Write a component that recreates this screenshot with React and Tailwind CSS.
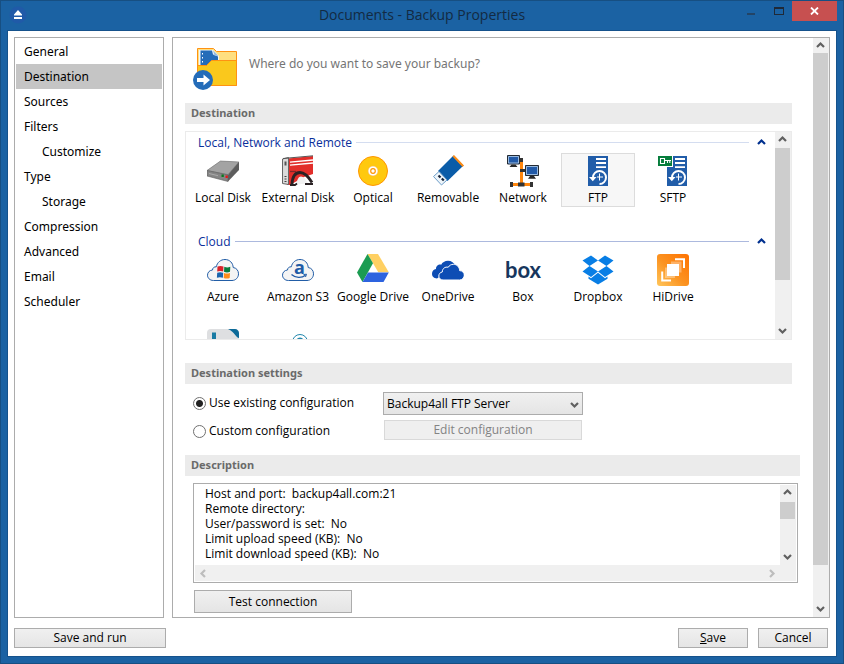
import React from "react";

function Chevron({ dir = "up", className = "" }) {
  const points = {
    up: "1,6 4.5,2.5 8,6",
    down: "1,3 4.5,6.5 8,3",
    left: "6,1 2.5,4.5 6,8",
    right: "3,1 6.5,4.5 3,8",
  };
  return (
    <svg viewBox="0 0 9 9" width="9" height="9" className={`shrink-0 ${className}`} fill="none" stroke="currentColor" strokeWidth="2.2">
      <polyline points={points[dir]} />
    </svg>
  );
}

function ScrollBar({ thumb, className = "" }) {
  return (
    <div className={`flex w-4 shrink-0 flex-col bg-[#f0f0f0] text-[#606060] ${className}`}>
      <button type="button" aria-label="Scroll up" className="flex h-[15px] w-[15px] shrink-0 items-center justify-center">
        <Chevron dir="up" />
      </button>
      <div className="min-h-0 flex-1">
        <div className={`w-[15px] bg-[#cdcdcd] ${thumb}`} />
      </div>
      <button type="button" aria-label="Scroll down" className="flex h-[17px] w-[15px] shrink-0 items-center justify-center pb-px">
        <Chevron dir="down" />
      </button>
    </div>
  );
}

function Icon({ children }) {
  return (
    <svg viewBox="0 0 32 32" width="32" height="32" className="block shrink-0">
      {children}
    </svg>
  );
}

const LocalDiskIcon = () => (
  <Icon>
    <path d="M13.5 6 32 7v4L21 20.500 0 15.500z" fill="#9b9b9b" />
    <path d="M13.500 6 32 7 21 19.500 0 15.500z" fill="#a3a3a3" stroke="#777" strokeWidth=".6" />
    <path d="M0 15.500 21 20v6.500L0 21z" fill="#858585" stroke="#5c5c5c" strokeWidth=".6" />
    <path d="M21 20 32 7v8L21 26.500z" fill="#5d5d5d" />
    <path d="M14.500 19.500h2.300v2.500h-2.300z" fill="#087a1d" />
    <path d="M18.500 20.500h2.300V23h-2.300z" fill="#e81717" />
    <path d="M2 18.500l9 2.200" stroke="#aaa" />
  </Icon>
);

const ExternalDiskIcon = () => (
  <Icon>
    <path d="M6 3.500 31 1v18L22 22 8 30H5z" fill="#e22e2a" />
    <path d="M.5 4 6.500 2.500v27l-6-1z" fill="#d9d9d9" stroke="#666" />
    <path d="M2.500 6.500h2v4h-2z" fill="#555" />
    <path d="M2.500 21.500h2M2.500 24h2M2.500 26.500h2" stroke="#444" />
    <path d="M1 3.500 31 .8" stroke="#555" />
    <path d="M8 7.200 31 5M8 10.200 31 8" stroke="#fff" strokeWidth="1.300" />
    <path d="M8 16.500h6" stroke="#7d2928" strokeWidth="1.300" />
    <path d="M14.500 29.500c.5-5 2-8 4.500-8s4.500 2.500 7 7z" fill="#f2f2f2" />
    <path d="M10 29c.5-8 3.500-11.500 8-11.500s8 3.500 12 10" fill="none" stroke="#2a2224" strokeWidth="2.800" />
    <path d="M8 30h5l2-1.500M23 29h8" fill="none" stroke="#2a2224" strokeWidth="1.800" />
  </Icon>
);

const OpticalIcon = () => (
  <Icon>
    <circle cx="16" cy="16" r="14.500" fill="#ffc90e" stroke="#ff9600" />
    <circle cx="16" cy="16" r="5" fill="#fff" stroke="#f5b14a" strokeWidth=".6" />
    <circle cx="16" cy="16" r="2.300" fill="#fff" stroke="#ff9600" strokeWidth="1.200" />
  </Icon>
);

const RemovableIcon = () => (
  <Icon>
    <path d="M21.500.5 31.500 10.500 15.500 26 6 16z" fill="#0a5ca8" />
    <path d="m20.500 1.500 1.500-1.500 10 10.500-1.500 1.500z" fill="#ff8c14" />
    <path d="m7 16.500 8 8.500-5.500 5-8-8.500z" fill="#eef5fa" stroke="#6d9dc9" />
    <path d="m6.500 20.500 2 2M9.800 23.500l2 2" stroke="#17263c" strokeWidth="2.200" />
  </Icon>
);

const NetworkIcon = () => (
  <Icon>
    <path d="M14.500 4v25M4 29.500h21" stroke="#ff860d" strokeWidth="3" fill="none" />
    <path d="M12 3h4v4h-4zM13 14h7v3h-7zM11 27.500h6.500v4H11zM3 27h3v5H3zM23 27h3v5h-3z" fill="#333" />
    <path d="M.5.500h12v8.500H.500zM18.500 10.500h13v10h-13z" fill="#225aa8" stroke="#252b33" />
    <path d="M1.500 1.500h10v6.500h-10zM19.500 11.500h11v8h-11z" fill="none" stroke="#b8d3ee" strokeWidth=".8" />
    <path d="M4.500 9.500h4l2 2.500h-8zM23 21h4l2 2.800h-8z" fill="#292929" />
  </Icon>
);

const ServerBody = () => (
  <g>
    <path d="M6 1h20v30H6z" fill="#215da9" />
    <path d="M14 4h10M14 8h10M14 12.200h10" stroke="#fff" strokeWidth="1.800" />
    <path d="M11 22.500a6.500 6.500 0 1 1 6.500 6.500" fill="none" stroke="#fff" strokeWidth="2" />
    <path d="M7 22h7.500l-3.700 4.200z" fill="#fff" />
    <path d="M17.500 18.500v7M15 22h6" stroke="#fff" />
  </g>
);

const FtpIcon = () => (
  <Icon>
    <ServerBody />
  </Icon>
);

const SftpIcon = () => (
  <Icon>
    <g transform="translate(4 0)">
      <ServerBody />
    </g>
    <path d="M0 0h16v12H0z" fill="#fff" />
    <path d="M1 1h14v10H1z" fill="#067d3c" />
    <path d="M3.500 3.500h4v5h-4zM7.500 5.500H14M10.500 5.500V8M12.800 5.500V8" fill="none" stroke="#fff" strokeWidth="1.100" />
  </Icon>
);

const CloudShape = () => (
  <path
    d="M6.500 26.500C2.500 26.500.5 23.700.5 21.200c0-2.900 2.200-5 5-5.200 0-1.900 1.600-3.400 3.800-3.200C10.200 8.500 13.600 5.500 18 5.500c4.700 0 8 3.500 8.200 8 3.300.5 5.300 3 5.300 6.300 0 3.700-2.700 6.700-6.500 6.700z"
    fill="#f4f4f4"
    stroke="#225da6"
    strokeWidth="1"
  />
);

const AzureIcon = () => (
  <Icon>
    <CloudShape />
    <path d="M10.500 12.500c2-.8 4-.8 6 0l-.3 5c-2-.8-4-.8-6 0z" fill="#d9222a" />
    <path d="M17.300 12.800c2 .8 4 .8 6 0l-.3 5c-2 .8-4 .8-6 0z" fill="#067d3c" />
    <path d="M10.200 18.800c2-.8 4-.8 6 0l-.3 5c-2-.8-4-.8-6 0z" fill="#1964ad" />
    <path d="M17 19c2 .8 4 .8 6 0l-.3 5c-2 .8-4 .8-6 0z" fill="#ff8c1a" />
  </Icon>
);

const AmazonIcon = () => (
  <Icon>
    <CloudShape />
    <text x="17.500" y="19.500" textAnchor="middle" fill="#205ba6" className="font-['Open_Sans',sans-serif] text-[18px] font-bold">a</text>
    <path d="M9.500 20.500c4 3.500 10 3.800 14 .8" fill="none" stroke="#205ba6" strokeWidth="1.400" />
    <path d="m21.500 20.500 3-.3-1 2.800" fill="none" stroke="#205ba6" />
  </Icon>
);

const GoogleDriveIcon = () => (
  <Icon>
    <path d="M10.500 0H21l10.800 18.300H21.300z" fill="#ffd062" />
    <path d="M10.500 0 16 9.300 5.500 28 0 18.500z" fill="#1b9c52" />
    <path d="M11 18.500h20.800L26.500 28h-21z" fill="#2d63df" />
  </Icon>
);

const OneDriveIcon = () => (
  <Icon>
    <path d="M5 24.500C2 24.500 0 22.500 0 19.800c0-2.500 1.700-4.300 4-4.700-.2-3 2.500-5 5.200-4.400C10.300 8.500 12.800 6.800 16 6.800c3.400 0 6.300 2 7.400 5.200z" fill="#0d4db4" />
    <path d="M11 26C8.500 26 6.800 24.200 6.800 22c0-2.100 1.400-3.700 3.500-4-.1-3.500 3-5.600 5.900-4.700 1-1.900 3-3 5.200-3 3.500 0 6.200 2.700 6.200 6.300 2.700.1 4.700 2 4.700 4.500 0 2.700-2 4.900-4.800 4.900z" fill="#0d4db4" stroke="#fff" strokeWidth="1" />
  </Icon>
);

const BoxIcon = () => (
  <svg viewBox="0 0 40 32" width="40" height="32" className="block shrink-0">
    <text x="20" y="24" textAnchor="middle" fill="#16365d" className="font-[Lato,sans-serif] text-[22px] font-bold">box</text>
  </svg>
);

const DropboxIcon = () => (
  <Icon>
    <path d="M9 1.500 16 6.600 7.500 12 .500 6.500zM23 1.500l8.500 5-7 5.500L16 6.600zM7.500 12l8.500 5.500L9 23 .500 17.500zM24.500 12l7 5.500L23 23l-7-5.500z" fill="#087ee5" />
    <path d="m16 18.800 7 5.400 2.500-1.700v2.300L16 30.500l-9.500-5.700v-2.300L9 24.200z" fill="#087ee5" />
  </Icon>
);

const HiDriveIcon = () => (
  <Icon>
    <defs>
      <linearGradient id="hidrive" x1="0" y1="1" x2="1" y2="0">
        <stop offset="0" stopColor="#ffc65b" />
        <stop offset=".45" stopColor="#fb9422" />
        <stop offset="1" stopColor="#ff7200" />
      </linearGradient>
    </defs>
    <rect width="32" height="32" rx="3" fill="url(#hidrive)" />
    <path d="M14 7.500h10.500v11H14z" fill="#fff" opacity=".35" />
    <path d="M8 13.500h10v10.500H8z" fill="#fff" opacity=".35" />
    <path d="M10 10h12v12H10z" fill="#fff" />
    <path d="M18 5.200h9V14M5.200 17.500V26.500H14" fill="none" stroke="#fff" strokeWidth="2" />
  </Icon>
);

const PartialTileIcon = () => (
  <Icon>
    <rect width="32" height="32" rx="4" fill="#dedfe1" />
    <path d="M5 3.500h4V16H5z" fill="#187aa3" />
    <path d="M21 0h7c2 0 4 2 4 4v5C29 9 28 3 21 0z" fill="#0d6a98" />
  </Icon>
);

const PartialRingIcon = () => (
  <Icon>
    <circle cx="18" cy="13" r="7.500" fill="#fff" stroke="#2187ad" />
    <circle cx="18" cy="12" r="3.500" fill="#2187ad" />
  </Icon>
);

const localItems = [
  { label: "Local Disk", icon: LocalDiskIcon },
  { label: "External Disk", icon: ExternalDiskIcon },
  { label: "Optical", icon: OpticalIcon },
  { label: "Removable", icon: RemovableIcon },
  { label: "Network", icon: NetworkIcon },
  { label: "FTP", icon: FtpIcon, selected: true },
  { label: "SFTP", icon: SftpIcon },
];

const cloudItems = [
  { label: "Azure", icon: AzureIcon },
  { label: "Amazon S3", icon: AmazonIcon },
  { label: "Google Drive", icon: GoogleDriveIcon },
  { label: "OneDrive", icon: OneDriveIcon },
  { label: "Box", icon: BoxIcon },
  { label: "Dropbox", icon: DropboxIcon },
  { label: "HiDrive", icon: HiDriveIcon },
  { label: "", icon: PartialTileIcon },
  { label: "", icon: PartialRingIcon },
];

function Group({ title, items, line }) {
  return (
    <section>
      <div className="flex h-[21px] items-center pr-[9px] pl-3">
        <h3 className="text-[#0a2f9b]">{title}</h3>
        <div className={`mr-2 ml-1 h-px flex-1 ${line}`} />
        <button type="button" aria-label={`Collapse ${title}`} className="text-[#00308f]">
          <Chevron dir="up" />
        </button>
      </div>
      <div className="flex flex-wrap gap-x-px gap-y-[21px]">
        {items.map(({ label, icon: Glyph, selected }, i) => (
          <button
            key={i}
            type="button"
            className={`flex h-[54px] w-[74px] flex-col items-center gap-[3px] border pt-px whitespace-nowrap ${
              selected ? "border-[#dcdcdc] bg-[#f7f7f7]" : "border-transparent"
            }`}
          >
            <Glyph />
            <span className="leading-4">{label}</span>
          </button>
        ))}
      </div>
    </section>
  );
}

function SectionBar({ children, className = "" }) {
  return (
    <h2 className={`h-[21px] shrink-0 bg-[#ebebeb] pl-[6px] font-['Noto_Sans',sans-serif] text-[11px] leading-5 font-bold text-[#6a6a6a] ${className}`}>
      {children}
    </h2>
  );
}

const navItems = [
  ["General"],
  ["Destination"],
  ["Sources"],
  ["Filters"],
  ["Customize", true],
  ["Type"],
  ["Storage", true],
  ["Compression"],
  ["Advanced"],
  ["Email"],
  ["Scheduler"],
];

const buttonLook = "border border-[#acacac] bg-linear-to-b from-[#f0f0f0] to-[#e5e5e5] text-center";

const description = `Host and port:  backup4all.com:21
Remote directory:
User/password is set:  No
Limit upload speed (KB):  No
Limit download speed (KB):  No`;

function FolderIcon() {
  return (
    <svg viewBox="0 0 46 44" width="46" height="44" className="shrink-0">
      <path d="M5.500 1.500h16l3 3h20v34h-39z" fill="#ffdf80" stroke="#ff9212" />
      <path d="M7 3h14l6 6v10H7z" fill="#eef5fb" />
      <path d="M8.500 3.500H20l1 4 5 2v10H8.500z" fill="#246cb9" />
      <path d="m21 3.500 5.500 5.500-4-.5z" fill="#8fb9e3" />
      <path d="M10.500 6v1.500M10.500 10v1.500M10.500 14v1.500" stroke="#fff" />
      <path d="M5.500 18.500h9l5-5h25v25h-39z" fill="#fac81c" stroke="#ff9212" />
      <circle cx="11" cy="33" r="10" fill="#246cb9" />
      <path d="M5 31h6.500v-3.500L18 33l-6.500 5.500V35H5z" fill="#fff" />
    </svg>
  );
}

export default function App() {
  return (
    <div className="flex min-h-screen flex-col border border-[#174f82] bg-[#1b62a3] px-[6px] pb-[6px] font-['Open_Sans','Noto_Sans',sans-serif] text-[12px] text-black">
      <header className="grid h-[29px] shrink-0 grid-cols-[1fr_auto_1fr]">
        <div className="pt-[5px] pl-[2px]">
          <svg viewBox="0 0 18 18" width="18" height="18">
            <circle cx="9" cy="9" r="8.500" fill="#205aa8" />
            <path d="M5 8.500 9 4l4 4.500v1H5zM5 11h8v2H5z" fill="#fff" />
          </svg>
        </div>
        <h1 className="text-[14px] leading-7 text-[#132a42]">Documents - Backup Properties</h1>
        <div className="flex items-start justify-end">
          <button type="button" aria-label="Minimize" className="flex h-5 w-[27px] items-center justify-center">
            <svg width="9" height="9" viewBox="0 0 9 9"><path d="M0 6h8v2H0z" fill="#234466" /></svg>
          </button>
          <button type="button" aria-label="Maximize" className="flex h-5 w-[27px] items-center justify-center">
            <svg width="10" height="8" viewBox="0 0 10 8"><path d="M0 0h10v8H0zM1 2v5h8V2z" fill="#1f2937" fillRule="evenodd" /></svg>
          </button>
          <button type="button" aria-label="Close" className="flex h-5 w-[45px] items-center justify-center bg-[#c75050]">
            <svg width="9" height="8" viewBox="0 0 9 8"><path d="m1 .5 7 7m0-7-7 7" stroke="#fff" strokeWidth="1.800" /></svg>
          </button>
        </div>
      </header>

      <div className="flex flex-1 flex-col border border-[#15528c] bg-white px-[6px] pt-[6px] pb-2">
        <div className="flex flex-1 gap-2">
          <nav className="flex w-[150px] shrink-0 flex-col border border-[#acacac] p-px font-['Noto_Sans',sans-serif]">
            {navItems.map(([name, sub]) => (
              <a
                key={name}
                href="#"
                className={`h-[25px] leading-[25px] ${sub ? "pl-[26px]" : "pl-2"} ${name === "Destination" ? "bg-[#c5c5c5]" : ""}`}
              >
                {name}
              </a>
            ))}
          </nav>

          <main className="flex min-w-0 flex-1 border border-[#acacac]">
            <div className="flex min-w-0 flex-1 flex-col pr-[13px] pl-3">
              <div className="flex h-[65px] items-start gap-[11px] pt-[9px] pl-[7px]">
                <FolderIcon />
                <p className="font-['Noto_Sans',sans-serif] leading-[34px] text-[#757575]">Where do you want to save your backup?</p>
              </div>

              <SectionBar className="mr-2">Destination</SectionBar>
              <div className="mt-[7px] mr-2 flex h-[209px] overflow-hidden border border-[#ebebeb]">
                <div className="min-w-0 flex-1 overflow-hidden">
                  <div className="flex flex-col gap-6">
                    <Group title="Local, Network and Remote" items={localItems} line="bg-[#d4ddf0]" />
                    <Group title="Cloud" items={cloudItems} line="bg-[#acb9de]" />
                  </div>
                </div>
                <ScrollBar thumb="mt-px h-[132px]" />
              </div>

              <SectionBar className="mt-[23px] mr-2">Destination settings</SectionBar>
              <div className="mt-2 grid grid-cols-[190px_200px] gap-y-1 pl-2">
                <label className="flex h-[22px] items-center gap-[3px]">
                  <input type="radio" name="configuration" defaultChecked className="size-[13px] appearance-none rounded-full border border-[#707070] bg-[radial-gradient(circle,#222_0_3px,#fff_4px)]" />
                  Use existing configuration
                </label>
                <div className="relative h-6">
                  <select aria-label="Existing configuration" className={`h-[23px] w-full appearance-none pl-[3px] text-left ${buttonLook}`}>
                    <option>Backup4all FTP Server</option>
                  </select>
                  <Chevron dir="down" className="pointer-events-none absolute top-2 right-1 text-[#606060]" />
                </div>
                <label className="flex h-[22px] items-center gap-[3px]">
                  <input type="radio" name="configuration" className="size-[13px] appearance-none rounded-full border border-[#707070] bg-white" />
                  Custom configuration
                </label>
                <button type="button" disabled className="mx-px h-5 border border-[#d9d9d9] bg-[#efefef] leading-[18px] text-[#838383]">
                  Edit configuration
                </button>
              </div>

              <SectionBar className="mt-[13px]">Description</SectionBar>
              <div className="mt-[7px] mr-[2px] ml-2 flex h-[100px] flex-col border border-[#acacac] p-px">
                <div className="flex min-h-0 flex-1">
                  <textarea
                    readOnly
                    aria-label="Description"
                    value={description}
                    className="min-w-0 flex-1 resize-none overflow-hidden pt-px pl-[10px] leading-[15px] whitespace-pre outline-none"
                  />
                  <ScrollBar thumb="mt-[2px] h-[17px]" />
                </div>
                <div className="flex h-4 shrink-0 items-center justify-between bg-[#f0f0f0] pr-5 pl-1 text-[#bdbdbd]">
                  <Chevron dir="left" />
                  <Chevron dir="right" />
                </div>
              </div>
              <button type="button" className={`mt-[7px] mb-1 ml-[9px] h-[23px] w-[158px] ${buttonLook}`}>
                Test connection
              </button>
            </div>
            <ScrollBar thumb="h-[512px]" />
          </main>
        </div>

        <footer className="mt-[10px] flex shrink-0 items-center gap-[10px] pr-[2px]">
          <button type="button" className={`mr-auto h-5 w-[152px] leading-[18px] ${buttonLook}`}>Save and run</button>
          <button type="button" className={`h-5 w-[70px] leading-[18px] ${buttonLook}`}>
            <span className="underline">S</span>ave
          </button>
          <button type="button" className={`h-5 w-[70px] leading-[18px] ${buttonLook}`}>Cancel</button>
        </footer>
      </div>
    </div>
  );
}
